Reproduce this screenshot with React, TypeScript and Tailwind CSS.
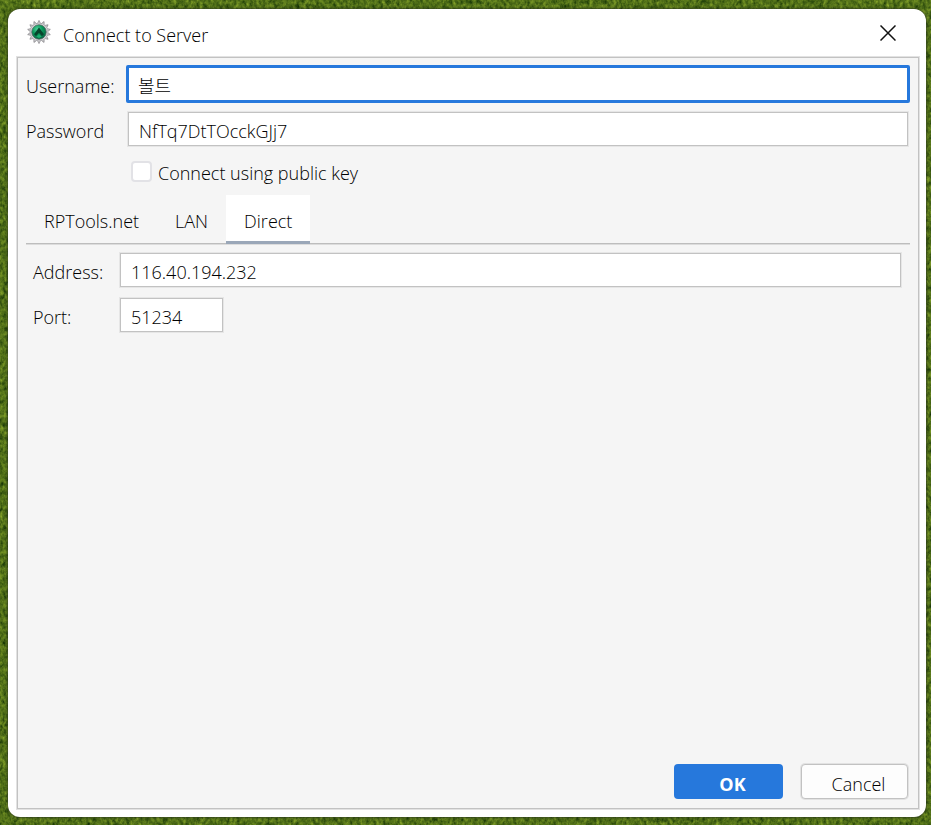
import { useState } from 'react';
import clsx from 'clsx';

const tabs = ['RPTools.net', 'LAN', 'Direct'] as const;

const fieldClass =
  'block w-full h-[34px] border border-[#c2c2c2] bg-white px-2.5 pt-1 outline-none ring-1 ring-[#e6e6e6]';

function Grass() {
  return (
    <svg className="absolute inset-0 h-full w-full" aria-hidden="true">
      <filter id="grass" x="0" y="0" width="100%" height="100%" colorInterpolationFilters="sRGB">
        <feTurbulence type="fractalNoise" baseFrequency="0.3 0.22" numOctaves="3" seed="7" />
        <feColorMatrix
          values="0.45 0.3 0 0 -0.06
                  0.45 0.3 0 0 0.06
                  0.15 0.1 0 0 -0.03
                  0 0 0 0 1"
        />
      </filter>
      <rect width="100%" height="100%" fill="#4d6d1b" />
      <rect width="100%" height="100%" filter="url(#grass)" />
    </svg>
  );
}

function AppIcon() {
  const teeth = Array.from({ length: 14 }, (_, i) => (i * 360) / 14);
  return (
    <svg className="mb-0.5 size-6" viewBox="0 0 24 24" aria-hidden="true">
      <defs>
        <radialGradient id="gem" cx="38%" cy="30%" r="75%">
          <stop offset="0" stopColor="#4fd09c" />
          <stop offset="0.45" stopColor="#0b9a5c" />
          <stop offset="1" stopColor="#056040" />
        </radialGradient>
      </defs>
      {teeth.map((angle) => (
        <path
          key={angle}
          d="M10 4.4 12 0.4 14 4.4z"
          fill="#d2d1d4"
          stroke="#858488"
          strokeWidth="0.7"
          transform={`rotate(${angle} 12 12)`}
        />
      ))}
      <circle cx="12" cy="12" r="8.8" fill="#e4e4e7" stroke="#a5a4a8" strokeWidth="0.6" />
      <circle cx="12" cy="12" r="7.3" fill="url(#gem)" stroke="#5b6662" strokeWidth="0.8" />
      <path d="M12 7.4 17 14.2 15 16 12 13 9 16 7 14.2z" fill="#06452c" />
      <path d="M9.4 16.4 12 14.4l2.6 2L12 18z" fill="#1cae70" />
    </svg>
  );
}

export default function App() {
  const [tab, setTab] = useState<(typeof tabs)[number]>('Direct');

  return (
    <div className="relative flex min-h-screen bg-[#4d6d1b] pt-[9px] pr-[5px] pb-2 pl-2 font-['Open_Sans','Noto_Sans_CJK_KR',sans-serif] text-lg leading-6 font-light text-black">
      <Grass />
      <form
        role="dialog"
        aria-labelledby="title"
        className="relative flex flex-1 flex-col rounded-xl bg-white pr-[7px] pb-2 pl-[9px] shadow-[0_0_2px_1px_rgba(40,50,30,0.6)]"
        onSubmit={(e) => e.preventDefault()}
      >
        <header className="flex h-12 items-center pl-2.5">
          <AppIcon />
          <h1 id="title" className="ml-3 pt-1">Connect to Server</h1>
          <button type="button" aria-label="Close" className="mr-[17px] ml-auto flex size-7 items-center justify-center">
            <svg className="size-4" viewBox="0 0 16 16" fill="none" stroke="#111" strokeWidth="1.5">
              <path d="M0.5 0.5l15 15M15.5 0.5l-15 15" />
            </svg>
          </button>
        </header>

        <div className="flex flex-1 flex-col border border-[#c2c2c2] bg-[#f5f5f5] px-2 pt-[7px] pb-[9px] ring-1 ring-[#e2e2e2]">
          <div className="grid grid-cols-[100px_1fr] items-center">
            <label htmlFor="username" className="pt-1">Username:</label>
            <input
              id="username"
              defaultValue="볼트"
              className="block h-[38px] w-full rounded-xs border-3 border-[#2678dc] bg-white px-[9px] pt-0.5 outline-none"
            />
            <label htmlFor="password" className="pt-1">Password</label>
            <div className="px-0.5 py-[9px]">
              <input id="password" defaultValue="NfTq7DtTOcckGJj7" className={fieldClass} />
            </div>
            <label className="col-start-2 flex h-8 items-center gap-1.5 pl-[5px]">
              <input
                type="checkbox"
                className="size-[21px] appearance-none rounded-sm border-2 border-[#e2e2e6] bg-white checked:bg-[#2678dc]"
              />
              <span className="pt-1">Connect using public key</span>
            </label>
          </div>

          <div role="tablist" className="mt-2 flex h-[49px] border-b border-[#bdbdbd] shadow-[0_1px_0_#dcdcdc]">
            {tabs.map((name) => (
              <button
                key={name}
                type="button"
                role="tab"
                aria-selected={tab === name}
                onClick={() => setTab(name)}
                className={clsx(
                  '-mb-px border-b-3 px-[18px] pt-1.5',
                  tab === name ? 'border-[#9aa7b8] bg-white' : 'border-transparent',
                )}
              >
                {name}
              </button>
            ))}
          </div>

          <div role="tabpanel" className="grid grid-cols-[87px_1fr] items-center gap-y-[11px] pt-[9px] pr-[9px] pl-[7px]">
            <label htmlFor="address" className="pt-1">Address:</label>
            <input id="address" defaultValue="116.40.194.232" className={fieldClass} />
            <label htmlFor="port" className="pt-1">Port:</label>
            <div className="w-[103px]">
              <input id="port" defaultValue="51234" className={fieldClass} />
            </div>
          </div>

          <footer className="mt-auto flex justify-end gap-[18px] pr-0.5">
            <button type="submit" className="h-[35px] w-[109px] rounded-sm bg-[#2678dc] pt-1 pl-2 font-bold text-white">
              OK
            </button>
            <button
              type="button"
              className="h-[35px] w-[107px] rounded-sm border border-[#c2c2c2] bg-[#fdfdfd] pt-1 pl-2 ring-1 ring-[#e2e2e2]"
            >
              Cancel
            </button>
          </footer>
        </div>
      </form>
    </div>
  );
}
